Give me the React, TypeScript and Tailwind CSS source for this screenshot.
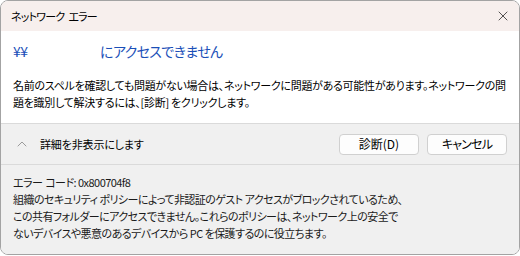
import { ChevronUp, X } from "lucide-react";

const jp = { fontFamily: '"Noto Sans CJK JP", "Noto Sans", sans-serif', fontFeatureSettings: '"palt"' };

export default function App() {
  return (
    <div className="w-[520px] h-[256px] bg-white" style={jp}>
      <div className="h-[255px] flex flex-col rounded-lg border border-[#a3a3a3] overflow-hidden">
        {/* title bar */}
        <div className="h-[30px] shrink-0 bg-[#f7efed] flex items-center justify-between pl-[10px] pr-[8px]">
          <span className="text-[11px] tracking-[-0.8px] text-black">
            ネットワーク<span className="ml-[4px]">エラー</span>
          </span>
          <X size={16} strokeWidth={1} className="text-black" />
        </div>

        {/* main message */}
        <div className="h-[92px] shrink-0 bg-white px-[12px] pt-[9px]">
          <h1 className="text-[14px] leading-[22px] tracking-[-0.6px] text-[#1a4fb8] whitespace-nowrap">
            <span className="inline-block w-[87px]">¥¥</span>にアクセスできません
          </h1>
          <p className="mt-[15px] text-[11px] leading-[17px] tracking-[-0.28px] text-black whitespace-nowrap">
            名前のスペルを確認しても問題がない場合は、ネットワークに問題がある可能性があります。ネットワークの問
            <br />
            題を識別して解決するには、[診断] をクリックします。
          </p>
        </div>

        {/* buttons row */}
        <div className="h-[41px] shrink-0 bg-[#f0f0f0] border-t border-[#dadada] flex items-center pl-[13px] pr-[12px]">
          <ChevronUp size={16} strokeWidth={1.1} className="text-[#7a7a7a]" />
          <span className="ml-[10px] text-[11px] tracking-[-0.15px] text-black">詳細を非表示にします</span>
          <div className="ml-auto flex gap-[8px]">
            <button className="w-[80px] h-[21px] rounded-[4px] border border-[#d0d0d0] bg-[#fdfdfd] text-[12px] leading-none text-black">
              診断(D)
            </button>
            <button className="w-[80px] h-[21px] rounded-[4px] border border-[#d0d0d0] bg-[#fdfdfd] text-[12px] leading-none tracking-[-0.8px] text-black">
              キャンセル
            </button>
          </div>
        </div>

        {/* details */}
        <div className="flex-1 bg-[#f0f0f0] border-t border-[#dadada] px-[12px] pt-[9px]">
          <p className="text-[11px] leading-[17px] tracking-[-0.55px] text-[#1a1a1a] whitespace-nowrap">
            エラー<span className="ml-[3px]">コード: 0x800704f8</span>
            <br />
            組織のセキュリティ ポリシーによって非認証のゲスト アクセスがブロックされているため、
            <br />
            この共有フォルダーにアクセスできません。これらのポリシーは、ネットワーク上の安全で
            <br />
            ないデバイスや悪意のあるデバイスから PC を保護するのに役立ちます。
          </p>
        </div>
      </div>
    </div>
  );
}
